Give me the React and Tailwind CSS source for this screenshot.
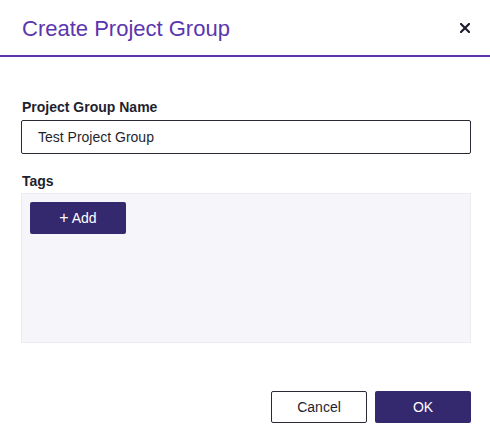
export default function App() {
  return (
    <div className="w-[490px] h-[443px] bg-white" style={{ fontFamily: '"Liberation Sans", Arial, sans-serif' }}>
      <div className="flex items-center justify-between h-[57px] pl-[22px] pr-[20px] border-b-2 border-[#5b36ae]">
        <h1 className="text-[22px] leading-none text-[#5b36ae] pt-[2px]">Create Project Group</h1>
        <button className="text-[#1f1f2e] leading-none">
          <svg width="10" height="10" viewBox="0 0 10 10">
            <path d="M1 1L9 9M9 1L1 9" stroke="#1f1f2e" strokeWidth="2.2" strokeLinecap="square" />
          </svg>
        </button>
      </div>
      <div className="pl-[21px] pr-[19px] pt-[42px]">
        <div className="text-[14px] font-bold text-[#1f1f2e] leading-[16px] pl-[1px]">Project Group Name</div>
        <div className="mt-[5px] h-[34px] border border-[#2a2a35] rounded-[2px] flex items-center pl-[16px] text-[14px] text-[#1f1f2e]">
          Test Project Group
        </div>
        <div className="mt-[19px] text-[14px] font-bold text-[#1f1f2e] leading-[16px] pl-[1px]">Tags</div>
        <div className="mt-[4px] h-[150px] bg-[#f5f5fa] border border-[#ebebf0] pt-[8px] pl-[8px]">
          <button className="w-[96px] h-[32px] bg-[#34286f] rounded-[2px] text-white text-[14px] flex items-center justify-center gap-[3px]">
            <span className="text-[16px] font-light leading-none">+</span>
            <span>Add</span>
          </button>
        </div>
        <div className="flex justify-end gap-[8px] mt-[48px]">
          <button className="w-[96px] h-[32px] border border-[#2a2a35] rounded-[2px] text-[14px] text-[#1f1f2e] bg-white">Cancel</button>
          <button className="w-[96px] h-[32px] bg-[#34286f] rounded-[2px] text-[14px] text-white">OK</button>
        </div>
      </div>
    </div>
  );
}
